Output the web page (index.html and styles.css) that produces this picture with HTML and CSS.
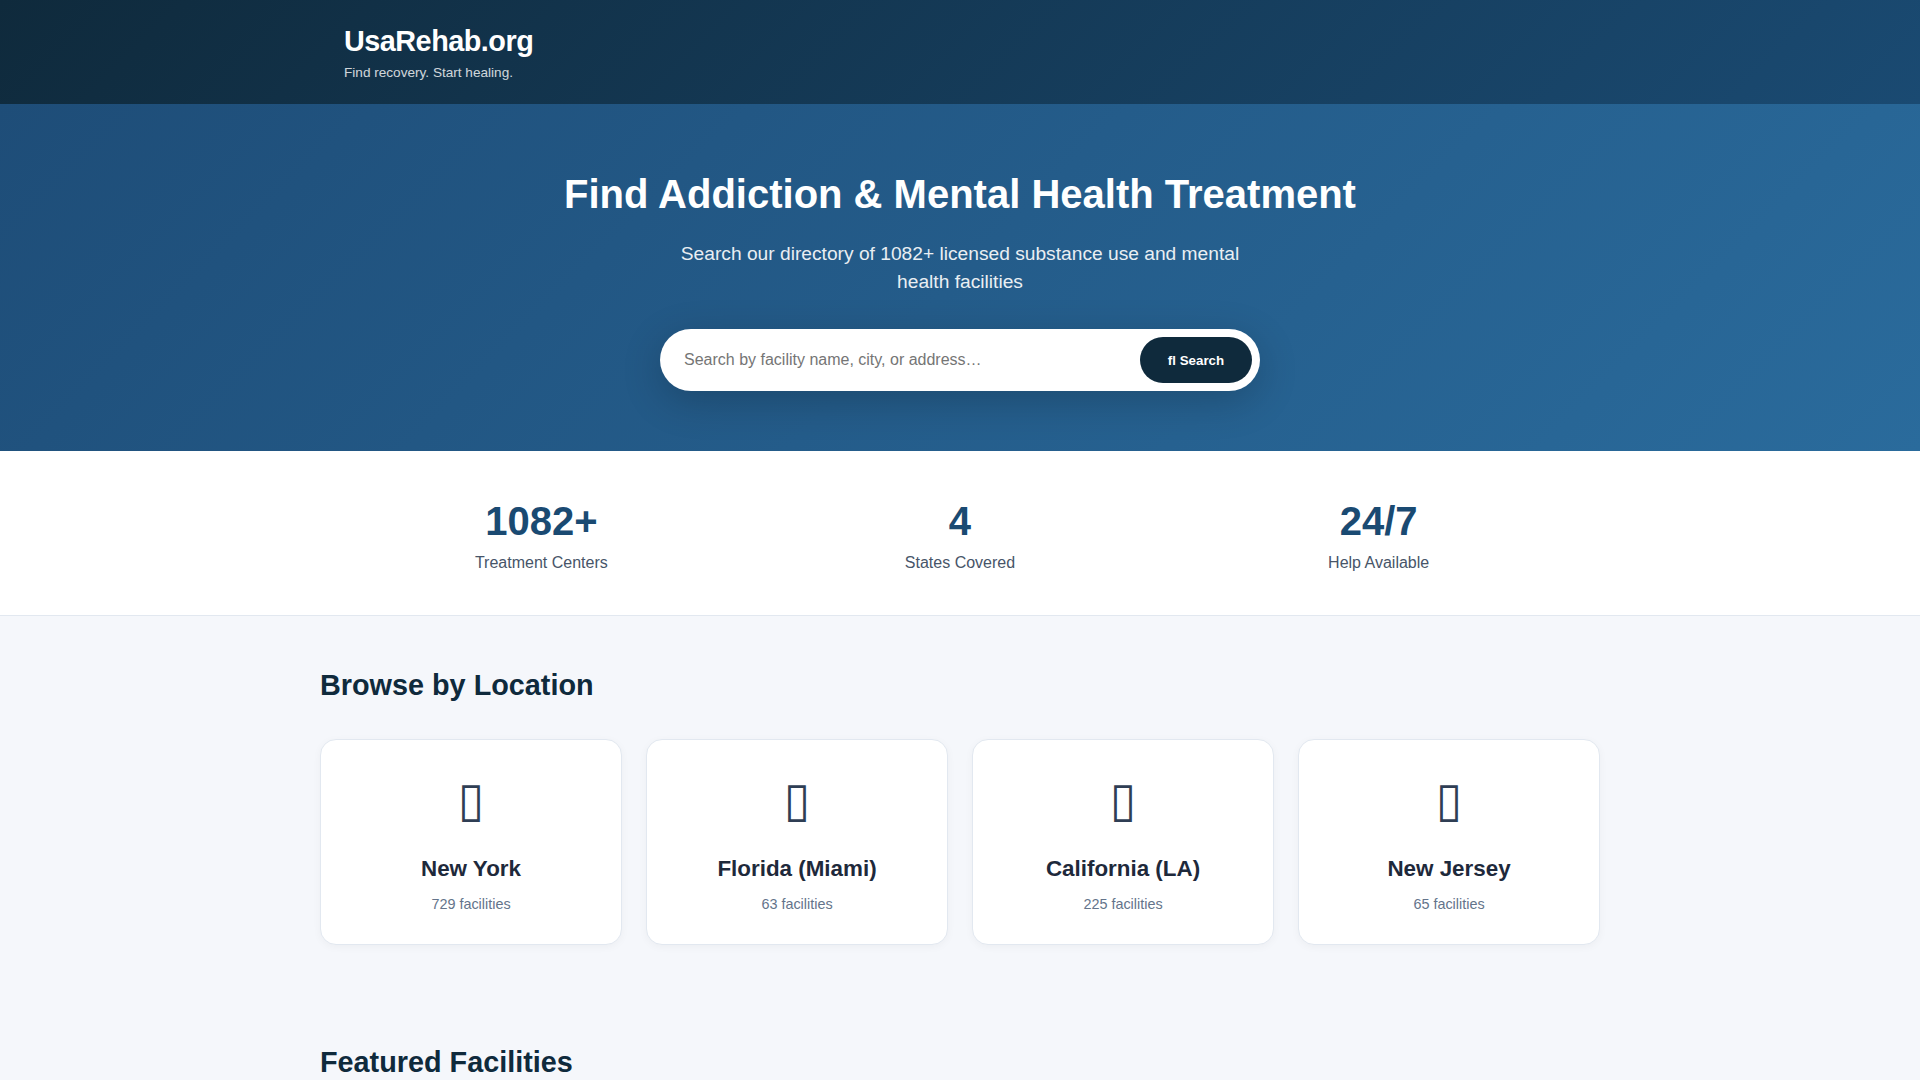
FILE: index.html
```html
<!DOCTYPE html>
<html lang="en">
<head>
<meta charset="utf-8">
<title>UsaRehab.org</title>
<link rel="stylesheet" href="styles.css">
</head>
<body>
<header class="site-header">
  <div class="header-inner">
    <div class="logo">UsaRehab.org</div>
    <div class="tagline">Find recovery. Start healing.</div>
  </div>
</header>
<section class="hero">
  <h1>Find Addiction &amp; Mental Health Treatment</h1>
  <p class="hero-sub">Search our directory of 1082+ licensed substance use and mental health facilities</p>
  <form class="search">
    <input class="search-input" type="text" placeholder="Search by facility name, city, or address…">
    <button class="search-btn" type="button">ﬂ Search</button>
  </form>
</section>
<section class="stats">
  <div class="stats-grid">
    <div class="stat"><div class="stat-num">1082+</div><div class="stat-label">Treatment Centers</div></div>
    <div class="stat"><div class="stat-num">4</div><div class="stat-label">States Covered</div></div>
    <div class="stat"><div class="stat-num">24/7</div><div class="stat-label">Help Available</div></div>
  </div>
</section>
<main class="main">
  <h2 class="section-title">Browse by Location</h2>
  <div class="cards">
    <a class="card"><div class="card-icon">&#x25AF;</div><h3>New York</h3><p>729 facilities</p></a>
    <a class="card"><div class="card-icon">&#x25AF;</div><h3>Florida (Miami)</h3><p>63 facilities</p></a>
    <a class="card"><div class="card-icon">&#x25AF;</div><h3>California (LA)</h3><p>225 facilities</p></a>
    <a class="card"><div class="card-icon">&#x25AF;</div><h3>New Jersey</h3><p>65 facilities</p></a>
  </div>
  <h2 class="section-title featured">Featured Facilities</h2>
</main>
</body>
</html>
```
FILE: styles.css
```css
* { box-sizing: border-box; margin: 0; padding: 0; }
html, body { height: 1080px; overflow: hidden; }
body { font-family: "Liberation Sans", Arial, sans-serif; background: #f5f7fb; color: #1e293b; line-height: 1.6; }

.site-header { height: 104px; background: linear-gradient(135deg, #0f2a3c 0%, #1a4a72 100%); color: #fff; padding: 20px 0; }
.header-inner { max-width: 1280px; margin: 0 auto; padding: 0 24px; }
.logo { font-size: 28.8px; font-weight: 700; letter-spacing: -0.5px; line-height: 1.5; margin-bottom: -1px; }
.tagline { font-size: 13.6px; opacity: 0.8; line-height: 1.6; }

.hero { height: 347px; background: linear-gradient(135deg, #1e4d78 0%, #2a6b9c 100%); color: #fff; text-align: center; padding: 64px 24px; }
.hero h1 { font-size: 40px; font-weight: 700; line-height: 1.3; margin-bottom: 20px; }
.hero-sub { font-size: 19.2px; line-height: 1.45; max-width: 600px; margin: 0 auto 33px; opacity: 0.9; }
.search { display: flex; align-items: center; width: 600px; height: 62px; margin: 0 auto; padding: 8px; background: #fff; border-radius: 31px; box-shadow: 0 10px 40px rgba(0,0,0,0.2); }
.search-input { flex: 1; min-width: 0; border: 0; outline: 0; background: transparent; padding: 0 16px; font: 16px "Liberation Sans", Arial, sans-serif; }
.search-btn { width: 112px; height: 46px; padding-top: 1px; border: 0; border-radius: 23px; background: #0f2a3c; color: #fff; font: 700 13.33px "Liberation Sans", Arial, sans-serif; }

.stats { height: 165px; background: #fff; border-bottom: 1px solid #e2e8f0; padding: 44px 0 0; }
.stats-grid { display: grid; grid-template-columns: repeat(3, 1fr); gap: 24px; max-width: 1280px; margin: 0 auto; padding: 0 24px; text-align: center; }
.stat-num { font-size: 40px; font-weight: 700; color: #1a4a72; line-height: 53px; margin-bottom: 2px; }
.stat-label { font-size: 16px; color: #475569; line-height: 1.6; }

.main { max-width: 1280px; margin: 0 auto; padding-top: 48px; }
.section-title { font-size: 28.8px; font-weight: 700; color: #0f2a3c; line-height: 1.5; margin-bottom: 32px; }
.cards { display: grid; grid-template-columns: repeat(4, 1fr); gap: 24px; }
.card { display: block; height: 206px; padding: 32px 24px; background: #fff; border: 1px solid #e2e8f0; border-radius: 16px; text-align: center; box-shadow: 0 2px 8px rgba(0,0,0,0.04); }
.card-icon { font-family: "DejaVu Sans", sans-serif; font-size: 48px; color: #2f3e54; line-height: 54px; margin-bottom: 26.4px; }
.card h3 { font-size: 22.4px; font-weight: 700; color: #1e293b; line-height: 1.4; margin-bottom: 9px; }
.card p { font-size: 14.4px; color: #64748b; line-height: 1.6; }
.featured { margin-top: 96px; }
```
